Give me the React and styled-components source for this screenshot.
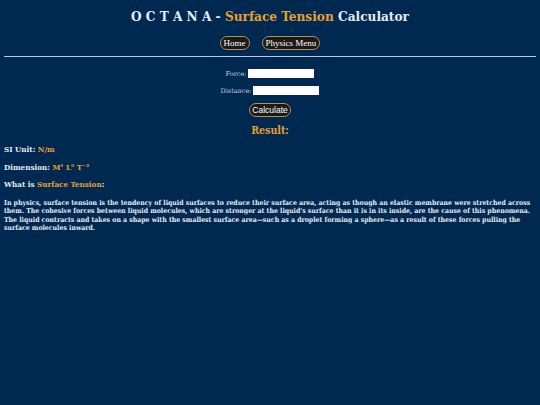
import React from "react";
import styled, { createGlobalStyle } from "styled-components";

const GlobalStyle = createGlobalStyle`
  html, body {
    margin: 0;
    padding: 0;
    background: #002952;
  }
  body {
    font-family: "DejaVu Serif Condensed", "DejaVu Serif", "Liberation Serif", serif;
    font-stretch: condensed;
    color: #e6ecf2;
  }
`;

const Page = styled.div`
  min-height: 405px;
  padding: 0 4px;
  box-sizing: border-box;
`;

const Header = styled.header`
  display: flex;
  flex-direction: column;
  align-items: center;
  padding-top: 8px;
`;

const Title = styled.h1`
  margin: 0;
  font-size: 13.5px;
  font-weight: bold;
  color: #e8ecef;
  white-space: pre;
`;

const Gold = styled.span`
  color: #e9a030;
`;

const Nav = styled.nav`
  display: flex;
  gap: 12px;
  margin-top: 12px;
`;

const NavButton = styled.button`
  font-family: "Liberation Serif", serif;
  font-size: 9px;
  color: #ffffff;
  background: #1c1a18;
  border: 1.5px solid #b89050;
  border-radius: 8px;
  padding: 1px 3px;
  line-height: 10px;
  cursor: pointer;
`;

const Rule = styled.hr`
  border: none;
  border-top: 1px solid #b8cce0;
  margin: 6px 0 0;
`;

const Form = styled.form`
  display: flex;
  flex-direction: column;
  align-items: center;
  margin-top: 12px;
`;

const Field = styled.label`
  display: flex;
  align-items: center;
  gap: 2px;
  font-family: "DejaVu Serif", serif;
  font-stretch: normal;
  font-size: 6.5px;
  color: #c8d8ea;
  margin-bottom: 8px;
`;

const Input = styled.input`
  width: 66px;
  height: 9px;
  padding: 0;
  border: none;
  background: #ffffff;
`;

const CalcButton = styled.button`
  font-family: "Liberation Sans", sans-serif;
  font-size: 8.5px;
  color: #ffffff;
  background: #1c1a18;
  border: 1.5px solid #b89050;
  border-radius: 8px;
  padding: 1px 2px;
  line-height: 10px;
  cursor: pointer;
`;

const ResultTitle = styled.h2`
  margin: 7px 0 0;
  font-size: 10.5px;
  font-weight: bold;
  color: #e9a030;
  text-align: center;
`;

const InfoLine = styled.p`
  margin: ${({ $top }) => $top}px 0 0;
  font-size: 8px;
  font-weight: bold;
  color: #e6ecf2;
`;

const Paragraph = styled.p`
  margin: 10px 0 0;
  font-size: 6.9px;
  line-height: 8.4px;
  font-weight: bold;
  color: #e6ecf2;
`;

export default function App() {
  return (
    <Page>
      <GlobalStyle />
      <Header>
        <Title>
          {"O C T A N A - "}
          <Gold>Surface Tension</Gold> Calculator
        </Title>
        <Nav>
          <NavButton>Home</NavButton>
          <NavButton>Physics Menu</NavButton>
        </Nav>
      </Header>
      <Rule />
      <Form onSubmit={(e) => e.preventDefault()}>
        <Field>
          Force: <Input type="text" />
        </Field>
        <Field>
          Distance: <Input type="text" />
        </Field>
        <CalcButton type="submit">Calculate</CalcButton>
      </Form>
      <ResultTitle>Result:</ResultTitle>
      <InfoLine $top={8}>
        SI Unit: <Gold>N/m</Gold>
      </InfoLine>
      <InfoLine $top={8}>
        Dimension: <Gold>M¹ L⁰ T⁻²</Gold>
      </InfoLine>
      <InfoLine $top={7}>
        What is <Gold>Surface Tension</Gold>:
      </InfoLine>
      <Paragraph>
        In physics, surface tension is the tendency of liquid surfaces to reduce
        their surface area, acting as though an elastic membrane were stretched
        across them. The cohesive forces between liquid molecules, which are
        stronger at the liquid's surface than it is in its inside, are the cause
        of this phenomena. The liquid contracts and takes on a shape with the
        smallest surface area—such as a droplet forming a sphere—as a result of
        these forces pulling the surface molecules inward.
      </Paragraph>
    </Page>
  );
}
